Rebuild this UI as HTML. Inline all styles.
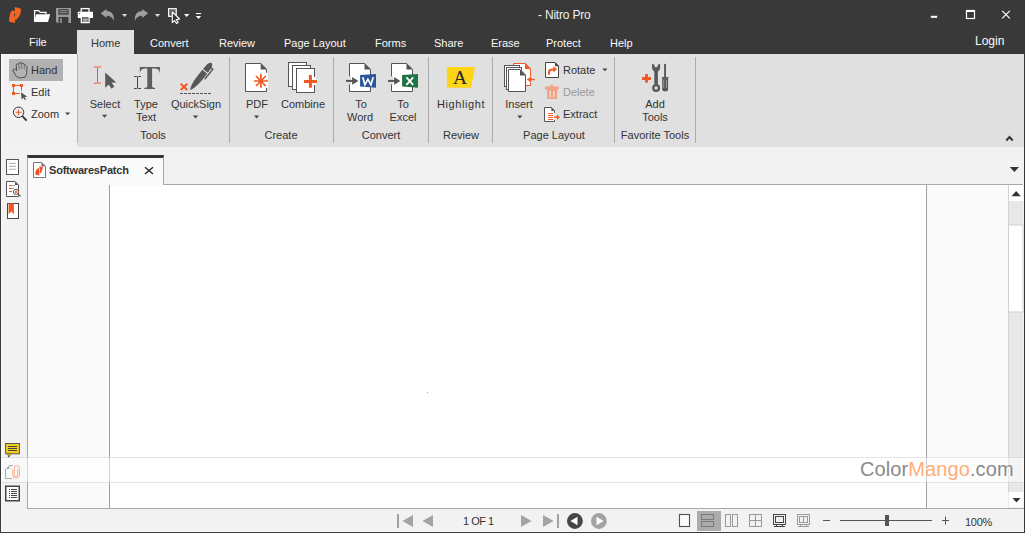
<!DOCTYPE html>
<html><head><meta charset="utf-8">
<style>
html,body{margin:0;padding:0;}
body{width:1025px;height:533px;overflow:hidden;background:#393939;font-family:"Liberation Sans",sans-serif;}
#w{position:relative;width:1025px;height:533px;overflow:hidden;background:#393939;}
.a{position:absolute;}
.t{position:absolute;white-space:nowrap;font-size:11px;line-height:13px;color:#333;}
.mw{color:#fafafa;}
svg{position:absolute;overflow:visible;}
.c{width:100px;text-align:center;}
</style></head><body><div id="w">
<!-- title bar & menu -->
<div class="t" style="left:538px;top:9px;font-size:12px;letter-spacing:-0.2px;color:#f0f0f0">- Nitro Pro</div>
<div class="a" style="left:77px;top:30px;width:57px;height:24px;background:#e0e0e0"></div>
<div class="t mw" style="left:29px;top:36px">File</div>
<div class="t" style="left:91px;top:37px">Home</div>
<div class="t mw" style="left:150px;top:37px">Convert</div>
<div class="t mw" style="left:219px;top:37px">Review</div>
<div class="t mw" style="left:284px;top:37px">Page Layout</div>
<div class="t mw" style="left:375px;top:37px">Forms</div>
<div class="t mw" style="left:434px;top:37px">Share</div>
<div class="t mw" style="left:491px;top:37px">Erase</div>
<div class="t mw" style="left:546px;top:37px">Protect</div>
<div class="t mw" style="left:610px;top:37px">Help</div>
<div class="t mw" style="left:975px;top:35px;font-size:12px">Login</div>

<!-- ribbon -->
<div class="a" style="left:1px;top:54px;width:76px;height:93px;background:#f1f1f1;border-top:1px solid #fafafa;box-sizing:border-box"></div>
<div class="a" style="left:77px;top:54px;width:947px;height:93px;background:#e0e0e0"></div>
<div class="a" style="left:77px;top:54px;width:1px;height:89px;background:#b4b4b4"></div>


<!-- ribbon text -->
<div class="a" style="left:9px;top:59px;width:54px;height:22px;background:#b1b1b1"></div>
<div class="t" style="left:31px;top:64px">Hand</div>
<div class="t" style="left:31px;top:86px">Edit</div>
<div class="t" style="left:31px;top:108px">Zoom</div>
<div class="t c" style="left:55px;top:98px">Select</div>
<div class="t c" style="left:96px;top:98px">Type</div>
<div class="t c" style="left:96px;top:111px">Text</div>
<div class="t c" style="left:146px;top:98px">QuickSign</div>
<div class="t c" style="left:207px;top:98px">PDF</div>
<div class="t c" style="left:253px;top:98px">Combine</div>
<div class="t c" style="left:311px;top:98px">To</div>
<div class="t c" style="left:310px;top:111px">Word</div>
<div class="t c" style="left:353px;top:98px">To</div>
<div class="t c" style="left:353px;top:111px">Excel</div>
<div class="t c" style="left:411px;top:98px;letter-spacing:0.6px">Highlight</div>
<div class="t c" style="left:469px;top:98px">Insert</div>
<div class="t" style="left:563px;top:64px">Rotate</div>
<div class="t" style="left:563px;top:86px;color:#999">Delete</div>
<div class="t" style="left:563px;top:108px">Extract</div>
<div class="t c" style="left:605px;top:98px">Add</div>
<div class="t c" style="left:605px;top:111px">Tools</div>
<div class="t c" style="left:103px;top:129px">Tools</div>
<div class="t c" style="left:231px;top:129px">Create</div>
<div class="t c" style="left:331px;top:129px">Convert</div>
<div class="t c" style="left:411px;top:129px">Review</div>
<div class="t c" style="left:504px;top:129px">Page Layout</div>
<div class="t c" style="left:605px;top:129px">Favorite Tools</div>

<!-- lower area -->
<div class="a" style="left:1px;top:147px;width:1023px;height:385px;background:#f2f2f2"></div>
<div class="a" style="left:27px;top:184px;width:981px;height:324px;background:#fafafa;border-top:1px solid #a8a8a8;border-left:1px solid #a8a8a8;box-sizing:border-box"></div>
<!-- tab -->
<div class="a" style="left:27px;top:155px;width:137px;height:30px;background:#fafafa;border-left:1px solid #a8a8a8;border-right:1px solid #a8a8a8;border-top:3px solid #333;box-sizing:border-box"></div>
<div class="t" style="left:49px;top:164px;font-weight:bold;color:#333;letter-spacing:-0.2px">SoftwaresPatch</div>
<!-- page -->
<div class="a" style="left:109px;top:185px;width:818px;height:323px;background:#fff;border-left:1px solid #a0a0a0;border-right:1px solid #a0a0a0;box-sizing:border-box"></div>
<!-- scrollbar -->
<div class="a" style="left:1008px;top:184px;width:15px;height:324px;background:#e8e8e8"></div>

<div class="a" style="left:427px;top:392px;width:1px;height:1px;background:#a898c8"></div>
<!-- status bar -->
<div class="a" style="left:27px;top:508px;width:997px;height:1px;background:#a8a8a8"></div>
<div class="a" style="left:1px;top:531px;width:1023px;height:1px;background:#fafafa"></div>
<div class="a" style="left:1px;top:54px;width:1px;height:478px;background:#fafafa"></div>
<div class="t" style="left:463px;top:515px;color:#333;letter-spacing:-0.5px">1 OF 1</div>
<div class="t" style="left:965px;top:516px;color:#333;letter-spacing:-0.3px">100%</div>


<!-- ICONS -->
<svg width="1025" height="533" style="left:0;top:0" viewBox="0 0 1025 533">
<!-- nitro logo -->
<path fill="#f26422" fill-rule="evenodd" d="M14.8,7 L20.6,8.4 Q21.2,8.9 20.9,11 L19.9,15.3 Q19.5,16.2 16.4,19.7 L15.4,19 L14.9,22.9 L9.5,21.8 Q8.9,21.2 9.2,18 L10,14 Q11,11 12.7,10.2 L14.9,11.2 Z M14.6,12.4 Q15.7,14.8 14.8,17.2 Q13.6,14.8 14.6,12.4 Z"/>
<!-- folder -->
<path d="M34.6,21.5 V10.6 H38.6 L40.2,12.4 H46 V14.3" fill="none" stroke="#fff" stroke-width="1.3"/>
<path d="M36.2,14.3 H50.2 L48,22 H34 Z" fill="#fff"/>
<!-- save -->
<path d="M56,8 H71 V23 H57.3 L56,21.7 Z" fill="#9a9a9a"/>
<rect x="58.4" y="9.2" width="10.2" height="5.4" fill="#393939"/>
<rect x="59.4" y="10.3" width="8.2" height="1" fill="#9a9a9a"/>
<rect x="59.4" y="12.3" width="8.2" height="1" fill="#9a9a9a"/>
<rect x="58.6" y="17" width="9.8" height="6" fill="#393939"/>
<rect x="60.2" y="18.2" width="1.6" height="4.8" fill="#9a9a9a"/>
<!-- printer -->
<rect x="81.2" y="8.6" width="7.8" height="4" fill="none" stroke="#fff" stroke-width="1.3"/>
<rect x="77.8" y="11.8" width="15.2" height="6.3" rx="0.5" fill="#fff"/>
<rect x="79.1" y="13.1" width="1" height="1" fill="#393939"/>
<rect x="81.3" y="16.6" width="7.8" height="6" fill="#393939" stroke="#fff" stroke-width="1.3"/>
<rect x="82.6" y="18.6" width="5.2" height="1" fill="#fff"/>
<rect x="82.6" y="20.5" width="5.2" height="1" fill="#fff"/>
<!-- undo -->
<path d="M100.7,13.3 L106.6,9 V11 C111,11 114.5,14 114,20.8 C112.5,17.5 110,15.8 106.6,15.8 V18 Z" fill="#9f9f9f"/>
<path d="M121.9,14 H127.2 L124.55,17 Z" fill="#d8d8d8"/>
<!-- redo -->
<path d="M148.1,13.3 L142.2,9 V11 C137.8,11 134.3,14 134.8,20.8 C136.3,17.5 138.8,15.8 142.2,15.8 V18 Z" fill="#9f9f9f"/>
<path d="M154.8,14 H160.2 L157.5,17 Z" fill="#d8d8d8"/>
<!-- select box -->
<rect x="168.6" y="8.7" width="7.6" height="7.6" fill="#5e5e5e" stroke="#fff" stroke-width="1.2"/>
<path d="M172.3,11.8 V22.6 L174.4,20.6 L176.6,23.5 L178.2,22.4 L176.2,19.6 L179.6,19 Z" fill="#393939" stroke="#fff" stroke-width="1.1" stroke-linejoin="round"/>
<path d="M184,14 H189.3 L186.65,17 Z" fill="#fff"/>
<rect x="195.9" y="13" width="5.2" height="1.1" fill="#fff"/>
<path d="M195.9,16 H201.1 L198.5,19 Z" fill="#fff"/>
<!-- window controls -->
<rect x="930.8" y="15.8" width="6.4" height="2" fill="#fff"/>
<rect x="966.5" y="10.5" width="8" height="8" fill="none" stroke="#fff" stroke-width="1.2"/>
<rect x="966" y="10" width="9" height="2" fill="#fff"/>
<path d="M1002.2,10.8 L1009.8,18.4 M1009.8,10.8 L1002.2,18.4" stroke="#fff" stroke-width="1.2"/>
</svg>


<svg width="1025" height="533" style="left:0;top:0" viewBox="0 0 1025 533">
<!-- separators -->
<g fill="#acacac">
<rect x="229" y="57" width="1" height="86"/>
<rect x="333" y="57" width="1" height="86"/>
<rect x="428" y="57" width="1" height="86"/>
<rect x="492" y="57" width="1" height="86"/>
<rect x="614" y="57" width="1" height="86"/>
<rect x="695" y="57" width="1" height="86"/>
</g>
<!-- hand -->
<path d="M12.6,70.2 L14.2,68.7 L16.6,70.6 L16.2,65.2 L17.4,63.6 L18.8,64.2 L19.8,62.5 L21.3,63 L23,63.5 L24.6,64.5 L26,65.6 L27,66.8 L26.6,74.2 L25,77.2 L19.4,78 L16.2,76.2 Z" fill="#b3b3b3" stroke="#3a3a3a" stroke-width="0.85" stroke-linejoin="round"/>
<path d="M18.8,64.2 L19.2,69.5 M21.3,63 L21.6,68.8 M24.3,64.4 L24.2,69.5" stroke="#555" stroke-width="0.7" fill="none"/>
<!-- edit -->
<path d="M13.5,93.5 V85.5 H21.5 V90.8 M13.5,93.5 H19.8" fill="none" stroke="#ef5a24" stroke-width="1"/>
<g fill="#ef5a24">
<rect x="12" y="84" width="3" height="3"/><rect x="20" y="84" width="3" height="3"/><rect x="12" y="92" width="3" height="3"/>
</g>
<path d="M21,92.2 L27.3,96.8 L24.6,97 L26,99.4 L24.8,100 L23.4,97.7 L21.6,99.5 Z" fill="#555"/>
<!-- zoom -->
<circle cx="18.6" cy="112.3" r="5.2" fill="none" stroke="#333" stroke-width="1"/>
<path d="M22.4,116.2 L26.6,120.6" stroke="#333" stroke-width="1.8"/>
<path d="M18.6,109.4 V115.2 M15.7,112.3 H21.5" stroke="#ef5a24" stroke-width="1.1"/>
<path d="M65,112.4 H70.2 L67.6,115.2 Z" fill="#444"/>
<!-- select -->
<path d="M93.9,66.9 H96.9 M98.1,66.9 H101 M93.9,83.2 H96.9 M98.1,83.2 H101 M97.5,67 V83.2" stroke="#e85a2a" stroke-width="1" fill="none"/>
<path d="M105.2,72.5 L116.4,82.6 L111.6,82.8 L114.4,86.6 L111.6,88.7 L108.6,84.4 L105.2,87.8 Z" fill="#5a5a5a"/>
<path d="M102,114.8 H107.2 L104.6,117.8 Z" fill="#444"/>
<!-- type text -->
<path d="M139.8,67 H159.9 V73.2 Q159,68.8 155.3,68.5 H152.1 V86.8 Q152.4,87.8 155.1,87.9 V89 H144.3 V87.9 Q147,87.8 147.3,86.8 V68.5 H144.4 Q140.7,68.8 139.8,73.2 Z" fill="#5e5e5e"/>
<path d="M134,76.5 H136.8 M138.2,76.5 H141 M134,88.5 H136.8 M138.2,88.5 H141 M137.5,76.5 V88.5" stroke="#444" stroke-width="1" fill="none"/>
<!-- quicksign -->
<g transform="translate(190.1,90) rotate(-51.2)">
<path d="M0,0 C4,-2.6 12,-3.3 23.4,-3.1 L23.4,3.1 C12,3.3 4,2.6 0,0 Z" fill="#575757"/>
<path d="M24.5,-3.1 L31,-2.8 Q34.5,-1.6 34.5,0 Q34.5,1.6 31,2.8 L24.5,3.1 Z" fill="#575757"/>
<path d="M17.5,4.7 L30.5,4.7 L30.5,2.7" stroke="#575757" stroke-width="1.4" fill="none"/>
</g>
<path d="M180.7,83.8 L187.3,90 M187.3,83.8 L180.7,90" stroke="#ef5a24" stroke-width="2.1"/>
<path d="M180,93.5 H211" stroke="#555" stroke-width="1.2" stroke-dasharray="3,1"/>
<path d="M192.9,115.5 H198.1 L195.5,118.5 Z" fill="#444"/>
<!-- pdf -->
<path d="M245.5,63.5 H260.8 L266.5,69.2 V91.5 H245.5 Z" fill="#fff" stroke="#555" stroke-width="1"/>
<path d="M260.7,63.2 L267,69.5 H260.7 Z" fill="#555"/>
<rect x="265" y="72.8" width="3" height="15.2" fill="#fff"/>
<g stroke="#ef5a24" stroke-width="1.7">
<path d="M260.9,74 V87.8 M254,81 H268 M256,76 L265.8,86 M265.8,76 L256,86"/>
</g>
<path d="M254,115.5 H259.2 L256.6,118.5 Z" fill="#444"/>
<!-- combine -->
<rect x="288.5" y="62.5" width="18" height="24" fill="#fff" stroke="#555" stroke-width="1"/>
<rect x="292.5" y="65.5" width="18" height="24" fill="#fff" stroke="#555" stroke-width="1"/>
<rect x="296.5" y="68.5" width="18" height="24" fill="#fff" stroke="#555" stroke-width="1"/>
<rect x="313" y="77" width="3" height="8" fill="#fff"/>
<path d="M310.4,75 V87.8 M304,81.4 H316.9" stroke="#ef5a24" stroke-width="3"/>
<!-- to word -->
<path d="M349.5,63.5 H364.6 L370.5,69.4 V91.5 H349.5 Z" fill="#fff" stroke="#555" stroke-width="1"/>
<path d="M364.5,63.2 L370.9,69.6 H364.5 Z" fill="#555"/>
<rect x="348.5" y="76.3" width="2.5" height="8" fill="#e0e0e0"/>
<path d="M346,80.9 H353" stroke="#555" stroke-width="2"/>
<path d="M352.1,77.1 L358.4,80.9 L352.1,84.7 Z" fill="#555"/>
<path d="M360.1,75 L376,74 V87.7 L360.1,86.5 Z" fill="#2b579a"/>
<path d="M362.8,77.3 L364.9,84.8 L367.9,79.2 L370.9,84.8 L373.2,77.3" stroke="#fff" stroke-width="1.7" fill="none" stroke-linejoin="miter"/>
<!-- to excel -->
<path d="M391.5,63.5 H406.6 L412.5,69.4 V91.5 H391.5 Z" fill="#fff" stroke="#555" stroke-width="1"/>
<path d="M406.5,63.2 L412.9,69.6 H406.5 Z" fill="#555"/>
<rect x="390.5" y="76.3" width="2.5" height="8" fill="#e0e0e0"/>
<path d="M388,80.9 H395" stroke="#555" stroke-width="2"/>
<path d="M394.1,77.1 L400.4,80.9 L394.1,84.7 Z" fill="#555"/>
<path d="M402.1,75 L418,74 V87.7 L402.1,86.5 Z" fill="#217346"/>
<path d="M406.4,77.3 L413.2,84.8 M413.2,77.3 L406.4,84.8" stroke="#fff" stroke-width="1.8"/>
<!-- highlight -->
<path d="M446.8,67 H474.9 L471.2,87.8 H446.8 Z" fill="#fdd418"/>
<text x="453" y="84.1" font-family="Liberation Serif" font-size="19.5" fill="#262630">A</text>
<!-- insert -->
<path d="M513.5,63.5 H525.2 L530.5,68.8 V85.5 H513.5 Z" fill="#fff" stroke="#ef5a24" stroke-width="1"/>
<path d="M525,63.1 L530.9,69 H525 Z" fill="#ef5a24"/>
<rect x="529" y="76.5" width="3" height="6" fill="#e0e0e0"/>
<path d="M530,79.5 H534.8" stroke="#ef5a24" stroke-width="1.4"/>
<path d="M526.8,79.5 L531.2,76.6 V82.4 Z" fill="#ef5a24"/>
<rect x="504.5" y="65.5" width="15" height="21" fill="#fff" stroke="#555" stroke-width="1"/>
<rect x="506.5" y="67.5" width="15" height="22" fill="#fff" stroke="#555" stroke-width="1"/>
<path d="M508.5,69.5 H520 L525.5,75 V91.5 H508.5 Z" fill="#fff" stroke="#555" stroke-width="1"/>
<path d="M520,69.5 L526,75.5 H520 Z" fill="#555"/>
<path d="M517.2,115.5 H522.4 L519.8,118.5 Z" fill="#444"/>
<!-- rotate -->
<path d="M545.5,62.5 H555 L558.5,66 V77.5 H545.5 Z" fill="#fff" stroke="#444" stroke-width="1"/>
<path d="M555,62.3 L558.9,66.3 H555 Z" fill="#444"/>
<path d="M548.9,74.8 V72.8 Q548.9,69.4 552,69.4 H553.8" stroke="#ef5a24" stroke-width="2" fill="none"/>
<path d="M557,69.3 L553.3,66.2 V72.4 Z" fill="#ef5a24"/>
<path d="M602.3,68.5 H607.5 L604.9,71.3 Z" fill="#444"/>
<!-- delete -->
<g fill="#eda384">
<rect x="550.3" y="84.8" width="3" height="1.8"/>
<rect x="545" y="86.5" width="13.9" height="2.8"/>
<path d="M546.9,89.3 H557.4 L557,99 H547.3 Z"/>
</g>
<rect x="549.4" y="91" width="1.5" height="6.5" fill="#f4dcd0"/>
<rect x="553" y="91" width="1.5" height="6.5" fill="#f4dcd0"/>
<!-- extract -->
<path d="M544.5,107.5 H551.3 L554.5,110.7 V121.5 H544.5 Z" fill="#fff" stroke="#555" stroke-width="1"/>
<path d="M551.3,107.2 L554.9,110.9 H551.3 Z" fill="#555"/>
<rect x="553.5" y="113" width="2" height="7" fill="#fff"/>
<g stroke="#ef5a24" stroke-width="1"><path d="M548.1,113.5 H553.1 M548.1,115.5 H553.1 M548.1,117.5 H553.1 M548.1,119.5 H553.1"/></g>
<path d="M554.3,117.2 H557.6" stroke="#ef5a24" stroke-width="1.8"/>
<path d="M559.8,117.2 L557.1,114.2 V120 Z" fill="#ef5a24"/>
<!-- add tools -->
<path d="M646.5,74.1 V82.8 M642,78.5 H651" stroke="#ef5a24" stroke-width="2.8"/>
<g fill="#595959">
<path d="M652.1,64 Q651.4,69.8 654.3,71.6 V84.5 H657.9 V71.6 Q660.8,69.8 660.1,64 L657.9,64.6 L657.7,66.6 Q656.1,68.2 654.5,66.6 L654.3,64.6 Z"/>
<circle cx="656.1" cy="88" r="4"/>
<rect x="664.1" y="63.9" width="1.9" height="13.6"/>
<path d="M662.2,78.5 H668.1 V89.6 Q668.1,91.4 665.1,91.4 Q662.2,91.4 662.2,89.6 Z"/>
<rect x="661.9" y="77" width="6.4" height="1.8"/>
</g>
<circle cx="656.1" cy="88" r="1.7" fill="#e0e0e0"/>
<rect x="663.3" y="80" width="0.9" height="8" fill="#9a9a9a"/>
<rect x="666" y="80" width="0.9" height="8" fill="#9a9a9a"/>
<!-- ribbon collapse -->
<path d="M1006.3,140.5 L1009.5,137 L1012.7,140.5" stroke="#333" stroke-width="2" fill="none"/>
<!-- tab strip dropdown -->
<path d="M1009.8,167 H1019 L1014.4,172 Z" fill="#333"/>
<!-- tab doc icon -->
<path d="M33.5,162.5 H41.6 L45.5,166.4 V177.5 H33.5 Z" fill="#fff" stroke="#777" stroke-width="1"/>
<path d="M41.5,162.1 L46,166.6 H41.5 Z" fill="#777"/>
<g fill="#f04e1e">
<path d="M39.5,166.2 L42.8,167 L42.5,169 L42,171 L40.3,173.5 L39.8,172 L40.3,169.8 L39.5,168.4 Z"/>
<path d="M38.2,168 L39.3,168.8 L39.2,170.2 L39.6,171.6 L39.2,175.6 L35.4,174.8 L35.4,172.6 L36.1,170 Z"/>
</g>
<!-- tab close -->
<path d="M145,167.2 L153,174 M153,167.2 L145,174" stroke="#222" stroke-width="1.3"/>
<!-- sidebar: pages -->
<rect x="6.5" y="159.5" width="12" height="15" fill="#fff" stroke="#555" stroke-width="1"/>
<path d="M9,163.3 H16 M9,166.3 H16 M9,169.3 H16" stroke="#aaa" stroke-width="1"/>
<!-- sidebar: search -->
<path d="M6.5,181.5 H15 L18.5,185 V196.5 H6.5 Z" fill="#fff" stroke="#555" stroke-width="1"/>
<path d="M15,181.4 L18.5,185 H15 Z" fill="#555"/>
<path d="M9,185.5 H12 M9,188.5 H12 M9,191.5 H12" stroke="#ef5a24" stroke-width="1"/>
<path d="M12,185.5 H15 M12,188.5 H14" stroke="#aaa" stroke-width="1"/>
<circle cx="16" cy="191.9" r="2.6" fill="#fff" stroke="#555" stroke-width="1"/>
<circle cx="16" cy="191.9" r="1.2" fill="#ef5a24"/>
<path d="M17.9,193.8 L20.6,196.4" stroke="#555" stroke-width="1.1"/>
<!-- sidebar: bookmark -->
<rect x="7.5" y="203.5" width="11" height="15" fill="#fff" stroke="#444" stroke-width="1"/>
<path d="M8.6,203.6 H13.9 V214.2 L11.25,211.5 L8.6,214.2 Z" fill="#ef5a24"/>
<!-- sidebar: comments -->
<rect x="5.6" y="443.5" width="13.8" height="10.3" fill="#f5cf1a" stroke="#555" stroke-width="1"/>
<path d="M8,453.8 L8.5,457.4 L11.2,453.8 Z" fill="#f5cf1a" stroke="#555" stroke-width="0.9"/>
<rect x="8.5" y="454" width="2.4" height="0.8" fill="#f5cf1a"/>
<path d="M8,446.5 H17 M8,448.5 H17 M8,450.5 H17" stroke="#444" stroke-width="1"/>
<!-- sidebar: attachments -->
<path d="M5.5,469 V478.5 H12 M9.4,465.5 H12.8" fill="none" stroke="#555" stroke-width="1"/>
<path d="M5.5,469 L9.4,465.3 V469 Z" fill="#555"/>
<path d="M12.7,469.5 V475 Q12.7,478.2 16,478.2 Q19.4,478.2 19.4,475 V468.4 Q19.4,465.5 16.8,465.5 Q14.3,465.5 14.3,468.4 V474.8 Q14.3,476.6 16,476.6 Q17.7,476.6 17.7,474.8 V469.5" fill="none" stroke="#ef5a24" stroke-width="1"/>
<!-- sidebar: list -->
<rect x="5.75" y="486.25" width="13.5" height="14.5" fill="#fff" stroke="#444" stroke-width="1.5"/>
<g fill="#444">
<rect x="9" y="489" width="1" height="1"/><rect x="9" y="491" width="1" height="1"/><rect x="9" y="493" width="1" height="1"/><rect x="9" y="495" width="1" height="1"/><rect x="9" y="497" width="1" height="1"/>
<rect x="11" y="489" width="6" height="1"/><rect x="11" y="491" width="6" height="1"/><rect x="11" y="493" width="6" height="1"/><rect x="11" y="495" width="6" height="1"/><rect x="11" y="497" width="6" height="1"/>
</g>
<!-- scrollbar -->
<rect x="1008.5" y="185" width="14.5" height="16" fill="#fff"/>
<path d="M1011.5,196.2 H1020.8 L1016.15,191 Z" fill="#333"/>
<rect x="1008" y="184" width="15" height="1" fill="#a8a8a8"/>
<rect x="1008" y="185" width="1" height="323" fill="#d4d4d4"/>
<rect x="1008.5" y="225" width="14.5" height="87" fill="#fff" stroke="#d0d0d0" stroke-width="1"/>
<rect x="1008.5" y="492" width="14.5" height="15.5" fill="#fff"/>
<path d="M1012.5,498 H1020.5 L1016.5,502.5 Z" fill="#333"/>
<!-- status bar -->
<g fill="#a3a3a3">
<rect x="397" y="514" width="2" height="14"/>
<path d="M413,515 V527 L402.5,521 Z"/>
<path d="M433,515 V527 L422.5,521 Z"/>
<path d="M521,515 V527 L531.6,521 Z"/>
<path d="M543,515 V527 L553.6,521 Z"/>
<rect x="557" y="514" width="2" height="14"/>
<circle cx="598.9" cy="521" r="7.9"/>
</g>
<circle cx="574.9" cy="521" r="7.9" fill="#464646"/>
<path d="M570.5,521 L577.5,516.8 V525.2 Z" fill="#fff"/>
<path d="M603.5,521 L596.5,516.8 V525.2 Z" fill="#fff"/>
<!-- view modes -->
<rect x="679.5" y="514.5" width="10" height="12" fill="#fafafa" stroke="#505050" stroke-width="1.1"/>
<rect x="697" y="511" width="24" height="20" fill="#acacac"/>
<rect x="701.5" y="514.5" width="12" height="5" fill="none" stroke="#7a7a7a" stroke-width="1"/>
<rect x="701.5" y="521.5" width="12" height="5" fill="none" stroke="#7a7a7a" stroke-width="1"/>
<g fill="none" stroke="#999" stroke-width="1">
<rect x="725.5" y="514.5" width="5" height="12"/>
<rect x="732.5" y="514.5" width="5" height="12"/>
<rect x="749.5" y="514.5" width="12" height="12"/>
<path d="M755.5,514.5 V526.5 M749.5,520.5 H761.5"/>
</g>
<g fill="none" stroke="#454545" stroke-width="1">
<rect x="773.5" y="514.5" width="12" height="10"/>
<rect x="775.5" y="516.5" width="8" height="6"/>
</g>
<g fill="#454545"><rect x="776" y="525" width="1" height="1"/><rect x="782" y="525" width="1" height="1"/><rect x="774" y="526" width="11" height="1"/></g>
<g fill="none" stroke="#9a9a9a" stroke-width="1">
<rect x="797.5" y="514.5" width="12" height="10"/>
<rect x="799.5" y="516.5" width="8" height="6"/>
<path d="M803.5,516.5 V522.5"/>
</g>
<g fill="#9a9a9a"><rect x="800" y="525" width="1" height="1"/><rect x="806" y="525" width="1" height="1"/><rect x="798" y="526" width="11" height="1"/></g>
<!-- zoom slider -->
<path d="M823,520.5 H830 M840,520.5 H932 M942,520.5 H949 M945.5,516.5 V524.5" stroke="#555" stroke-width="1"/>
<rect x="885" y="515" width="4" height="11" fill="#555"/>
</svg>

<!-- watermark -->
<div class="a" style="left:1px;top:457px;width:1023px;height:26px;background:rgba(255,255,255,0.5);border-top:1px solid rgba(0,0,0,0.1);border-bottom:1px solid rgba(0,0,0,0.1);box-sizing:border-box"></div>
<div class="t" style="left:860px;top:458px;font-size:20px;line-height:23px;letter-spacing:0.1px;color:#8a8a8a">Color<span style="color:#ffae7a">Mango</span>.com</div>

<!-- window borders -->
<div class="a" style="left:0;top:0;width:1px;height:533px;background:#393939"></div>
<div class="a" style="left:1024px;top:0;width:1px;height:533px;background:#393939"></div>
<div class="a" style="left:0;top:532px;width:1025px;height:1px;background:#393939"></div>
</div></body></html>
